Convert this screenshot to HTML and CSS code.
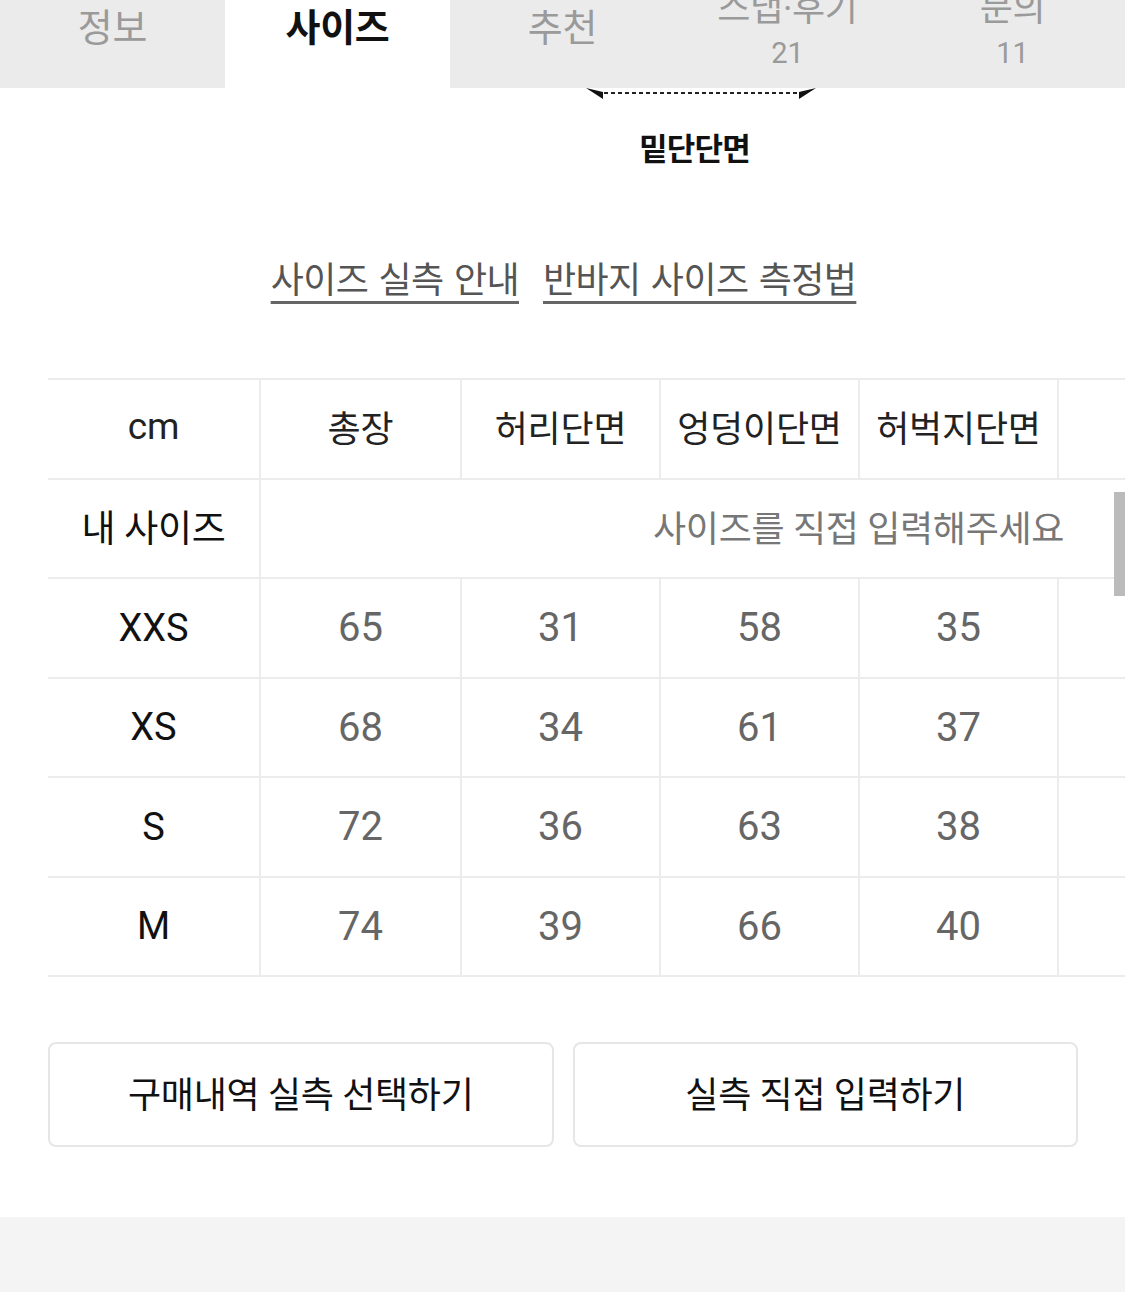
FILE: index.html
```html
<!DOCTYPE html>
<html lang="ko">
<head>
<meta charset="utf-8">
<title>사이즈</title>
<link rel="stylesheet" href="styles.css">
</head>
<body>
<div class="page">
  <nav class="tabs">
    <div class="tab"><span class="t-label">정보</span></div>
    <div class="tab active"><span class="t-label">사이즈</span></div>
    <div class="tab"><span class="t-label">추천</span></div>
    <div class="tab two"><span class="t-label">스냅·후기</span><span class="t-count">21</span></div>
    <div class="tab two"><span class="t-label">문의</span><span class="t-count">11</span></div>
  </nav>

  <section class="diagram">
    <svg class="arrow" width="1125" height="16" viewBox="0 0 1125 16">
      <polygon points="586,0 603,4 603,11" fill="#111"/>
      <line x1="604" y1="5" x2="798" y2="5" stroke="#222" stroke-width="2.2" stroke-dasharray="4 3"/>
      <polygon points="816,0 799,4 799,11" fill="#111"/>
    </svg>
    <div class="d-label">밑단단면</div>
  </section>

  <div class="links">
    <a class="link">사이즈 실측 안내</a>
    <a class="link">반바지 사이즈 측정법</a>
  </div>

  <div class="table-wrap">
    <table class="size-table">
      <colgroup>
        <col class="c0"><col class="c1"><col class="c2"><col class="c3"><col class="c4"><col class="c5">
      </colgroup>
      <thead>
        <tr><th>cm</th><th>총장</th><th>허리단면</th><th>엉덩이단면</th><th>허벅지단면</th><th></th></tr>
      </thead>
      <tbody>
        <tr class="mine"><td class="size">내 사이즈</td><td class="placeholder" colspan="5">사이즈를 직접 입력해주세요</td></tr>
        <tr><td class="size">XXS</td><td>65</td><td>31</td><td>58</td><td>35</td><td></td></tr>
        <tr><td class="size">XS</td><td>68</td><td>34</td><td>61</td><td>37</td><td></td></tr>
        <tr><td class="size">S</td><td>72</td><td>36</td><td>63</td><td>38</td><td></td></tr>
        <tr><td class="size">M</td><td>74</td><td>39</td><td>66</td><td>40</td><td></td></tr>
      </tbody>
    </table>
  </div>

  <div class="buttons">
    <button class="btn">구매내역 실측 선택하기</button>
    <button class="btn">실측 직접 입력하기</button>
  </div>

  <footer class="footer"></footer>

  <div class="scrollbar"></div>
</div>
</body>
</html>
```

FILE: styles.css
```css
* { box-sizing: border-box; }
html, body { margin: 0; padding: 0; background: #fff; }
body {
  font-family: Roboto, "Noto Sans CJK KR", "Noto Sans", sans-serif;
  color: #111;
  width: 1125px;
  height: 1292px;
  overflow: hidden;
}
.page { position: relative; width: 1125px; height: 1292px; }

.tabs {
  display: flex;
  height: 88px;
  background: #ebebeb;
  overflow: hidden;
}
.tab {
  width: 225px;
  display: flex;
  flex-direction: column;
  align-items: center;
  padding-top: 6px;
  color: #9a9a9a;
}
.tab.active { background: #fff; color: #111; font-weight: 700; }
.t-label { font-size: 38px; line-height: 44px; letter-spacing: -0.3px; }
.tab.two { padding-top: 0; margin-top: -13px; }
.tab.two .t-label { font-size: 36px; }
.t-count { font-size: 29px; line-height: 44px; }

.diagram { height: 152px; position: relative; }
.arrow { display: block; margin-top: 0; }
.d-label {
  text-align: center;
  font-size: 31px;
  font-weight: 700;
  margin-top: 26px;
  line-height: 40px;
  letter-spacing: -0.8px;
  padding-left: 264px;
}

.links {
  display: flex;
  justify-content: center;
  gap: 24px;
  height: 138px;
  padding-top: 16px;
  padding-left: 2px;
}
.link {
  font-size: 36px;
  line-height: 50px;
  color: #555;
  text-decoration: underline;
  text-decoration-thickness: 3px;
  text-underline-offset: 8px;
  text-decoration-color: #666;
  letter-spacing: -0.6px;
  word-spacing: 2px;
}

.table-wrap {
  margin-left: 48px;
  width: 1077px;
  overflow: hidden;
}
.size-table {
  border-collapse: collapse;
  table-layout: fixed;
  width: 1210px;
}
.c0 { width: 212px; }
.c1 { width: 201px; }
.c2 { width: 199px; }
.c3 { width: 199px; }
.c4 { width: 199px; }
.c5 { width: 200px; }
.size-table th, .size-table td {
  height: 99.5px;
  padding: 0;
  text-align: center;
  vertical-align: middle;
  border-top: 2px solid #ececec;
  border-bottom: 2px solid #ececec;
  border-left: 2px solid #ececec;
}
.size-table tr > :first-child { border-left: none; }
.size-table th {
  font-weight: 400;
  font-size: 36px;
  color: #222;
  letter-spacing: -0.2px;
  white-space: nowrap;
  padding-bottom: 5px;
}
.size-table th:first-child { font-size: 37px; }
.size-table td {
  font-size: 40px;
  color: #666;
}
.size-table td.size { color: #111; font-size: 38px; }
.size-table tr.mine td { padding-bottom: 5px; }
.size-table tr.mine td.size { font-size: 37px; letter-spacing: -0.3px; }
.size-table td.placeholder {
  text-align: left;
  padding-left: 392px;
  font-size: 36px;
  color: #777;
  letter-spacing: -0.3px;
  white-space: nowrap;
}

.buttons {
  display: flex;
  gap: 19px;
  padding: 65px 47px 0 48px;
  height: 240px;
}
.btn {
  flex: 1;
  height: 105px;
  background: #fff;
  border: 2px solid #e6e6e6;
  border-radius: 8px;
  font-family: Roboto, "Noto Sans CJK KR", sans-serif;
  font-size: 36px;
  color: #111;
  letter-spacing: -0.3px;
  padding: 0 0 5px 0;
}

.footer { height: 76px; background: #f4f4f4; }

.scrollbar {
  position: absolute;
  right: 0;
  top: 492px;
  width: 11px;
  height: 104px;
  background: #bbb;
}
```
